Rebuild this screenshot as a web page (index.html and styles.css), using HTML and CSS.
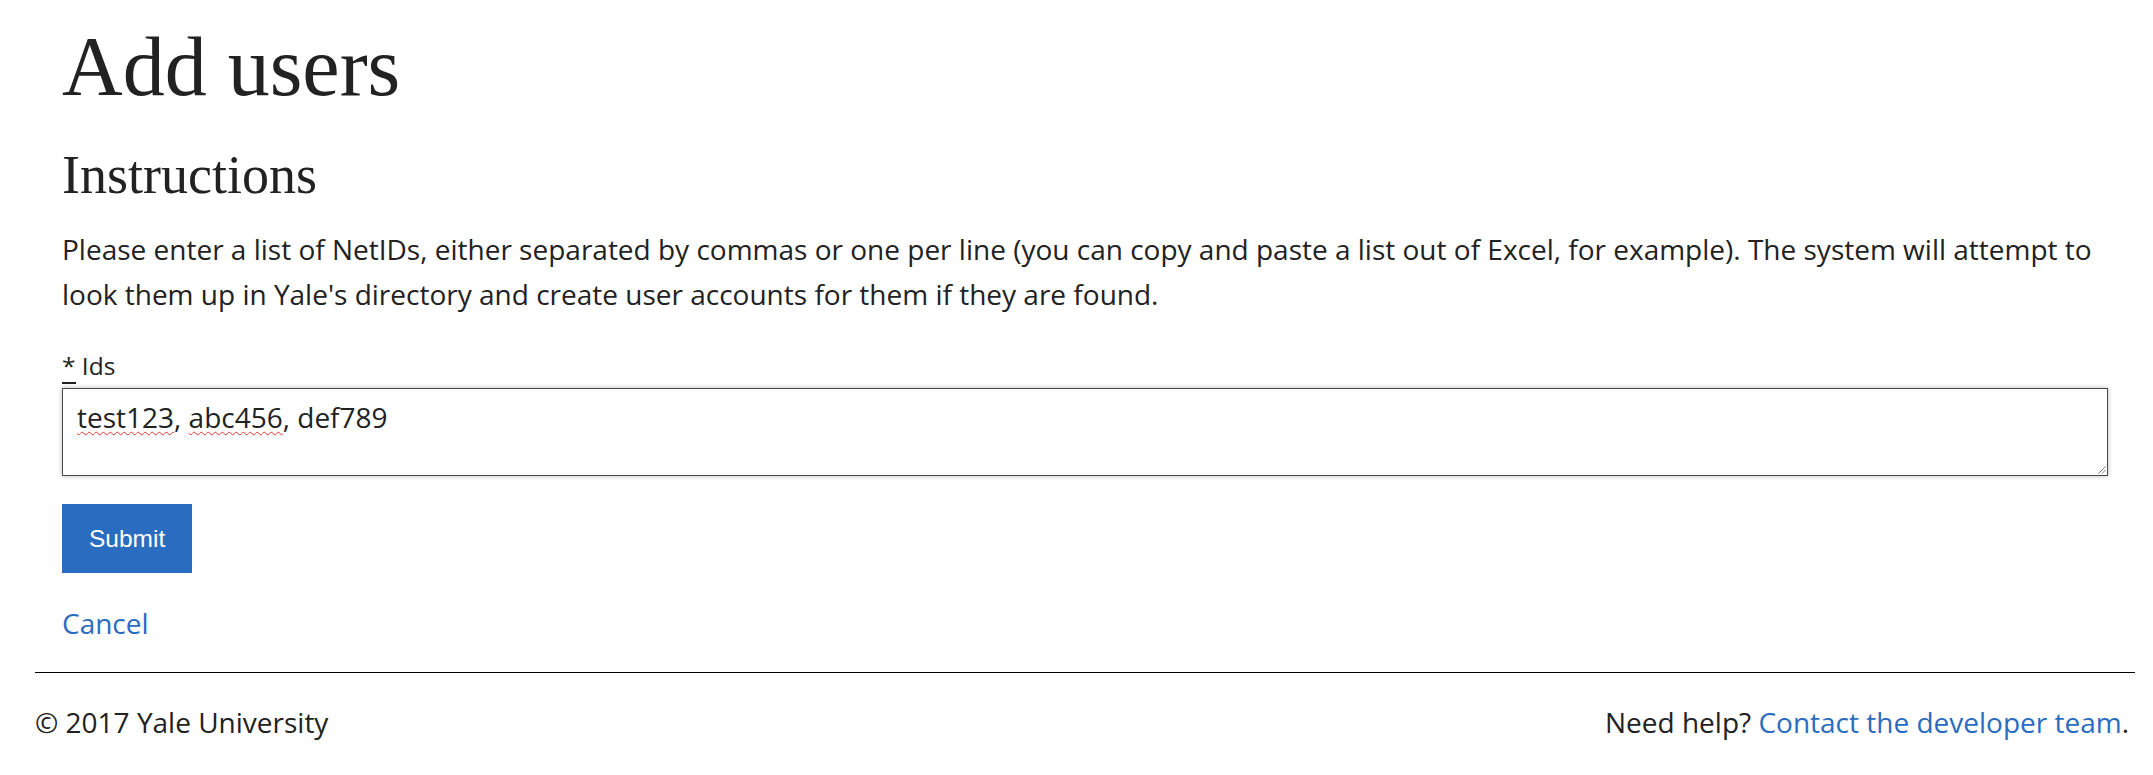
FILE: index.html
```html
<!DOCTYPE html>
<html lang="en">
<head>
<meta charset="utf-8">
<title>Add users</title>
<link rel="stylesheet" href="styles.css">
</head>
<body>
<main class="content">
  <h1 class="title">Add users</h1>
  <h2 class="subtitle">Instructions</h2>
  <p class="intro">Please enter a list of NetIDs, either separated by commas or one per line (you can copy and paste a list out of Excel, for example). The system will attempt to look them up in Yale's directory and create user accounts for them if they are found.</p>
  <form class="form">
    <label class="field-label" for="ids"><abbr class="req" title="required">*</abbr> Ids</label>
    <div class="textbox" id="ids" role="textbox" aria-multiline="true" contenteditable="true"><span class="typo">test123</span>, <span class="typo">abc456</span>, def789<svg class="grip" width="9" height="9" viewBox="0 0 9 9" aria-hidden="true"><path d="M8.5 1.5 L1.5 8.5 M8.5 5 L5 8.5" stroke="#777" stroke-width="1" fill="none"/></svg></div>
    <button class="submit" type="button">Submit</button>
    <a class="cancel" href="#">Cancel</a>
  </form>
</main>
<footer class="footer">
  <span class="copy">© 2017 Yale University</span>
  <span class="help">Need help? <a class="help-link" href="#">Contact the developer team</a>.</span>
</footer>
</body>
</html>
```
FILE: styles.css
```css
html, body {
  margin: 0;
  padding: 0;
  background: #fff;
}

body {
  font-family: "Open Sans", "Noto Sans", sans-serif;
  font-size: 28px;
  line-height: 45px;
  color: #222;
}

.content {
  padding: 21px 45px 0 62px;
}

.title {
  margin: 0;
  font-family: "Liberation Serif", "Times New Roman", serif;
  font-weight: normal;
  font-size: 84px;
  line-height: 92px;
  color: #222;
}

.subtitle {
  margin: 31.5px 0 0;
  font-family: "Liberation Serif", "Times New Roman", serif;
  font-weight: normal;
  font-size: 54px;
  line-height: 60px;
  color: #222;
}

.intro {
  margin: 22px 0 0;
}

.form {
  display: flex;
  flex-direction: column;
  align-items: flex-start;
}

.field-label {
  display: block;
  margin-top: 34px;
  font-size: 24.5px;
  line-height: 30px;
}

.req {
  text-decoration: none;
  border-bottom: 2px solid #222;
  line-height: 1;
}

.textbox {
  position: relative;
  box-sizing: border-box;
  align-self: stretch;
  margin-top: 7.5px;
  height: 88px;
  padding: 6px 14px;
  border: 1px solid #4a4a4a;
  box-shadow: 0 0 5px rgba(0, 0, 0, 0.28);
  background: #fff;
  outline: none;
  white-space: pre-wrap;
}

.typo {
  text-decoration: underline wavy #e33;
  text-decoration-thickness: 1px;
  text-underline-offset: 3px;
  text-decoration-skip-ink: none;
}

.grip {
  position: absolute;
  right: 1px;
  bottom: 1px;
}

.submit {
  margin-top: 28px;
  height: 69px;
  padding: 0 27px;
  border: none;
  border-radius: 0;
  background: #2a6cc0;
  color: #fff;
  font-family: "Liberation Sans", Arial, sans-serif;
  font-size: 24.5px;
  cursor: pointer;
}

.cancel {
  display: block;
  margin-top: 27.5px;
  color: #2a6cc0;
  text-decoration: none;
}

.footer {
  display: flex;
  justify-content: space-between;
  margin: 26.5px 18px 0 35px;
  padding: 26.5px 6px 0 0;
  border-top: 1px solid #000;
}

.help-link {
  color: #2a6cc0;
  text-decoration: none;
}
```
